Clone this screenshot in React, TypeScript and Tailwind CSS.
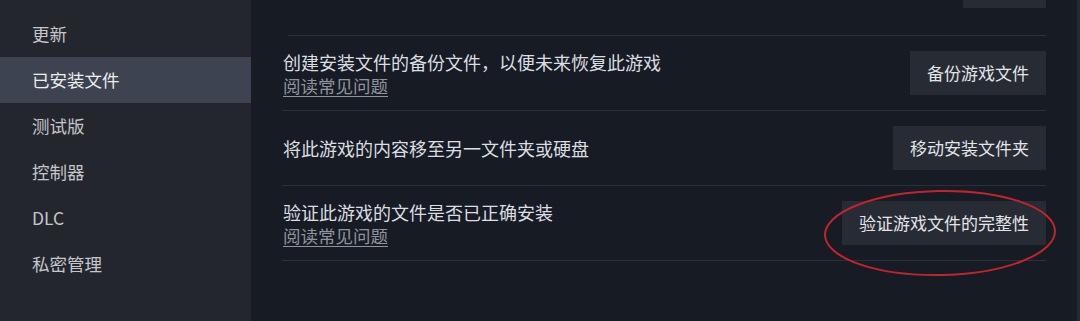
import React from "react";

const font = { fontFamily: '"Noto Sans CJK SC", "Noto Sans", sans-serif' };

const sideItems = ["更新", "已安装文件", "测试版", "控制器", "DLC", "私密管理"];

function Row({
  title,
  link,
  button,
}: {
  title: string;
  link?: boolean;
  button: string;
}) {
  return (
    <div className="flex h-[75px] items-center justify-between border-b border-[#2a2f38]">
      <div className="flex flex-col pl-[1px]">
        <div className="text-[18px] leading-[26px] text-[#dcdee0]">{title}</div>
        {link && (
          <div className="text-[17.5px] leading-[22px] text-[#8f949b] underline underline-offset-[3px] decoration-[1px]">
            阅读常见问题
          </div>
        )}
      </div>
      <div className="flex h-[44px] items-center bg-[#272b34] px-[17px] text-[17px] text-[#e4e5e7]">
        {button}
      </div>
    </div>
  );
}

export default function App() {
  return (
    <div
      className="relative flex h-[321px] w-[1080px] overflow-hidden bg-[#161b24]"
      style={font}
    >
      <div className="flex w-[251px] shrink-0 flex-col bg-[#24262e] pt-[11px]">
        {sideItems.map((s) => (
          <div
            key={s}
            className={
              "flex h-[46px] items-center pl-[32px] text-[17.5px] " +
              (s === "已安装文件"
                ? "bg-[#3d4350] text-[#eceded]"
                : "text-[#c4c6ca]")
            }
          >
            {s}
          </div>
        ))}
      </div>
      <div className="flex flex-1 flex-col px-[31px]">
        <div className="flex h-[35px] items-start justify-end">
          <div className="h-[8px] w-[83px] bg-[#272b34]" />
        </div>
        <div className="ml-[6px] h-px bg-[#2a2f38]" />
        <Row title="创建安装文件的备份文件，以便未来恢复此游戏" link button="备份游戏文件" />
        <Row title="将此游戏的内容移至另一文件夹或硬盘" button="移动安装文件夹" />
        <Row title="验证此游戏的文件是否已正确安装" link button="验证游戏文件的完整性" />
      </div>
      <div className="w-[3px] shrink-0 bg-[#262a31]" />
      <svg
        className="pointer-events-none absolute left-0 top-0"
        width="1080"
        height="321"
        viewBox="0 0 1080 321"
      >
        <ellipse
          cx="940"
          cy="233"
          rx="115"
          ry="42"
          fill="none"
          stroke="#c3242b"
          strokeWidth="2"
          transform="rotate(-1 940 233)"
        />
      </svg>
    </div>
  );
}
